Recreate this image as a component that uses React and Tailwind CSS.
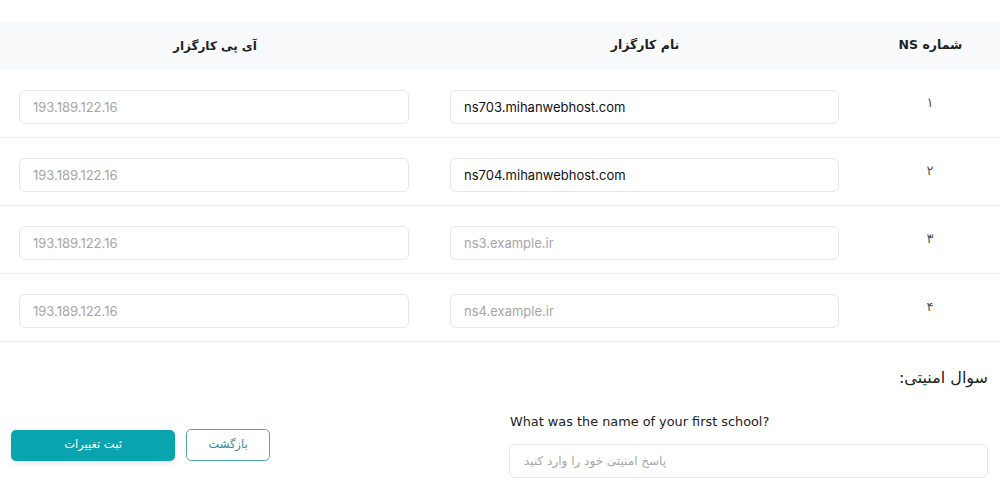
import React from "react";

const rows = [
  { n: "۱", name: "ns703.mihanwebhost.com", namePh: "", ip: "193.189.122.16" },
  { n: "۲", name: "ns704.mihanwebhost.com", namePh: "", ip: "193.189.122.16" },
  { n: "۳", name: "", namePh: "ns3.example.ir", ip: "193.189.122.16" },
  { n: "۴", name: "", namePh: "ns4.example.ir", ip: "193.189.122.16" },
];

const fa = { fontFamily: '"DejaVu Sans", "Noto Sans", sans-serif' };
const inter = { fontFamily: 'Inter, "Liberation Sans", sans-serif' };

function Field({ value, placeholder }) {
  return (
    <input
      dir="ltr"
      readOnly
      value={value}
      placeholder={placeholder}
      style={inter}
      className="w-full h-[34px] rounded-[6px] border border-[#e6e6e6] bg-white px-[13px] text-[13px] text-[#111] placeholder:text-[#a6a6a6] outline-none"
    />
  );
}

export default function App() {
  return (
    <div dir="rtl" className="w-[1000px] h-[485px] bg-white pt-[21px] overflow-hidden" style={fa}>
      <div className="grid grid-cols-[140px_430px_430px] h-[49px] bg-[#f8f9fa] items-center text-[12.5px] font-bold text-[#1f1f1f]">
        <div className="text-center pl-[1px]">شماره NS</div>
        <div className="text-center">نام کارگزار</div>
        <div className="text-center text-[12px]">آی پی کارگزار</div>
      </div>
      {rows.map((r) => (
        <div
          key={r.n}
          className="grid grid-cols-[140px_430px_430px] h-[68px] items-start pt-[20px] border-b border-[#ececec]"
        >
          <div className="h-[34px] flex items-center justify-center pb-[8px] text-[13px] text-[#555]">{r.n}</div>
          <div className="px-[20px] pr-[21px]">
            <Field value={r.name} placeholder={r.namePh} />
          </div>
          <div className="pr-[21px] pl-[19px]">
            <Field value="" placeholder={r.ip} />
          </div>
        </div>
      ))}
      <div className="px-[12px] pt-[24px]">
        <div className="text-[16px] leading-[24px] text-[#222]">سوال امنیتی:</div>
        <div className="mt-[22px] flex items-center justify-between">
          <div className="w-[479px]">
            <div dir="ltr" className="text-left pl-[1px] text-[12.85px] leading-[20px] text-[#222]">
              What was the name of your first school?
            </div>
            <input
              dir="ltr"
              readOnly
              placeholder="پاسخ امنیتی خود را وارد کنید"
              style={fa}
              className="mt-[12px] w-full h-[34px] rounded-[6px] border border-[#e6e6e6] bg-white px-[14px] text-[12px] placeholder:text-[#a6a6a6] outline-none"
            />
          </div>
          <div className="flex items-center gap-[11px] ml-[-1px]">
            <button className="w-[84px] h-[32px] rounded-[5px] border border-[#4fa8b0] bg-white text-[11.5px] text-[#2c8f99]">
              بازگشت
            </button>
            <button className="w-[164px] h-[31px] rounded-[5px] bg-[#0aa4ae] text-[11.5px] text-white shadow-[0_3px_6px_rgba(0,0,0,0.08)]">
              ثبت تغییرات
            </button>
          </div>
        </div>
      </div>
    </div>
  );
}
